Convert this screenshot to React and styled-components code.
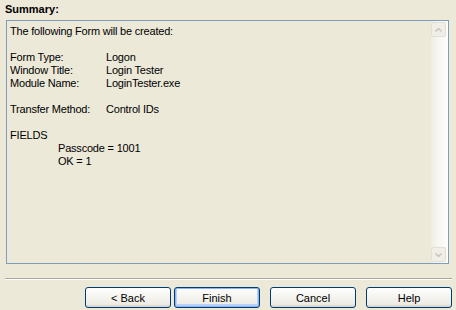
import React from "react";
import styled, { createGlobalStyle } from "styled-components";

const GlobalStyle = createGlobalStyle`
  html, body {
    margin: 0;
    padding: 0;
    background: #ece9d8;
  }
  body {
    font-family: "Liberation Sans", Arial, sans-serif;
    font-size: 11px;
    color: #000;
  }
`;

const Dialog = styled.div`
  width: 456px;
  height: 310px;
  box-sizing: border-box;
  padding: 3px 5px 0 5px;
  display: flex;
  flex-direction: column;
  background: #ece9d8;
`;

const Label = styled.div`
  font-weight: bold;
  font-size: 11px;
  line-height: 13px;
  height: 17px;
`;

const SummaryBox = styled.div`
  margin-left: 1px;
  width: 443px;
  height: 244px;
  box-sizing: border-box;
  border: 1px solid #7f9db9;
  display: flex;
`;

const SummaryText = styled.div`
  flex: 1;
  padding: 4px 0 0 3px;
  line-height: 13px;
  letter-spacing: -0.2px;
  white-space: pre;
`;

const Line = styled.div`
  display: flex;
  height: 13px;
  padding-left: ${(p) => p.$indent || 0}px;
`;

const Key = styled.span`
  width: 96px;
`;

const ScrollBar = styled.div`
  width: 16px;
  display: flex;
  flex-direction: column;
  justify-content: space-between;
  background: linear-gradient(to right, #eeede5 0%, #f7f6f2 40%, #fdfdfb 100%);
  padding: 1px 1px 1px 0;
`;

const ArrowButton = styled.div`
  width: 15px;
  height: 15px;
  box-sizing: border-box;
  border: 1px solid #e2dfd4;
  border-radius: 2px;
  background: #f0eee7;
  display: flex;
  align-items: center;
  justify-content: center;
`;

const Separator = styled.div`
  margin-top: 14px;
  height: 1px;
  background: #aca899;
  border-bottom: 1px solid #ffffff;
  width: 447px;
`;

const ButtonRow = styled.div`
  margin-top: 7px;
  display: flex;
  justify-content: flex-end;
  width: 447px;
`;

const Button = styled.button`
  width: 86px;
  height: 21px;
  margin-left: ${(p) => p.$gap}px;
  box-sizing: border-box;
  border: 1px solid #003c74;
  border-radius: 3px;
  background: linear-gradient(to bottom, #ffffff 0%, #f4f3ee 50%, #ecebe4 85%, #d6d0c5 100%);
  font-family: "Liberation Sans", Arial, sans-serif;
  font-size: 11px;
  color: #000;
  padding: 0;
  box-shadow: ${(p) =>
    p.$default ? "inset 0 0 0 1px #8cb4f2, inset 0 -1px 0 2px #b9d1fa" : "none"};
`;

const Chevron = ({ down }) => (
  <svg width="7" height="4" viewBox="0 0 7 4">
    <path
      d={down ? "M0.5 0.5 L3.5 3.5 L6.5 0.5" : "M0.5 3.5 L3.5 0.5 L6.5 3.5"}
      fill="none"
      stroke="#c5c2b6"
      strokeWidth="1.4"
    />
  </svg>
);

const rows = [
  { text: "The following Form will be created:" },
  {},
  { key: "Form Type:", value: "Logon" },
  { key: "Window Title:", value: "Login Tester" },
  { key: "Module Name:", value: "LoginTester.exe" },
  {},
  { key: "Transfer Method:", value: "Control IDs" },
  {},
  { text: "FIELDS" },
  { text: "Passcode = 1001", indent: 48 },
  { text: "OK = 1", indent: 48 },
];

export default function App() {
  return (
    <>
      <GlobalStyle />
      <Dialog>
        <Label>Summary:</Label>
        <SummaryBox>
          <SummaryText>
            {rows.map((r, i) =>
              r.key ? (
                <Line key={i}>
                  <Key>{r.key}</Key>
                  <span>{r.value}</span>
                </Line>
              ) : (
                <Line key={i} $indent={r.indent}>
                  {r.text || ""}
                </Line>
              )
            )}
          </SummaryText>
          <ScrollBar>
            <ArrowButton>
              <Chevron />
            </ArrowButton>
            <ArrowButton>
              <Chevron down />
            </ArrowButton>
          </ScrollBar>
        </SummaryBox>
        <Separator />
        <ButtonRow>
          <Button $gap={0}>&lt; Back</Button>
          <Button $gap={3} $default>
            Finish
          </Button>
          <Button $gap={10}>Cancel</Button>
          <Button $gap={10}>Help</Button>
        </ButtonRow>
      </Dialog>
    </>
  );
}
